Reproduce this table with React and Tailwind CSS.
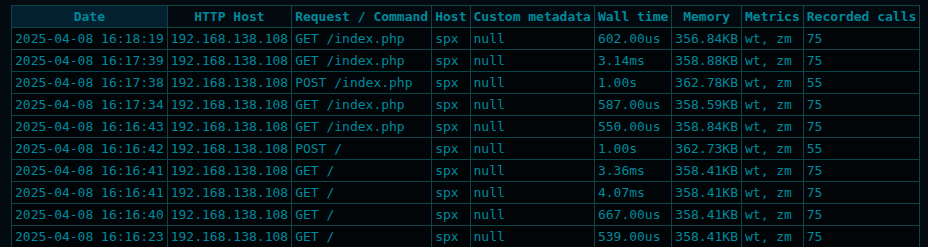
const columns = [
  'Date',
  'HTTP Host',
  'Request / Command',
  'Host',
  'Custom metadata',
  'Wall time',
  'Memory',
  'Metrics',
  'Recorded calls',
];

const rows = [
  ['2025-04-08 16:18:19', '192.168.138.108', 'GET /index.php', 'spx', 'null', '602.00us', '356.84KB', 'wt, zm', '75'],
  ['2025-04-08 16:17:39', '192.168.138.108', 'GET /index.php', 'spx', 'null', '3.14ms', '358.88KB', 'wt, zm', '75'],
  ['2025-04-08 16:17:38', '192.168.138.108', 'POST /index.php', 'spx', 'null', '1.00s', '362.78KB', 'wt, zm', '55'],
  ['2025-04-08 16:17:34', '192.168.138.108', 'GET /index.php', 'spx', 'null', '587.00us', '358.59KB', 'wt, zm', '75'],
  ['2025-04-08 16:16:43', '192.168.138.108', 'GET /index.php', 'spx', 'null', '550.00us', '358.84KB', 'wt, zm', '75'],
  ['2025-04-08 16:16:42', '192.168.138.108', 'POST /', 'spx', 'null', '1.00s', '362.73KB', 'wt, zm', '55'],
  ['2025-04-08 16:16:41', '192.168.138.108', 'GET /', 'spx', 'null', '3.36ms', '358.41KB', 'wt, zm', '75'],
  ['2025-04-08 16:16:41', '192.168.138.108', 'GET /', 'spx', 'null', '4.07ms', '358.41KB', 'wt, zm', '75'],
  ['2025-04-08 16:16:40', '192.168.138.108', 'GET /', 'spx', 'null', '667.00us', '358.41KB', 'wt, zm', '75'],
  ['2025-04-08 16:16:23', '192.168.138.108', 'GET /', 'spx', 'null', '539.00us', '358.41KB', 'wt, zm', '75'],
];

export default function App() {
  return (
    <div
      className="min-h-screen bg-[#030b10] pl-[11px] pt-[5px] text-[13px] leading-[15px] text-[#00899c]"
      style={{ fontFamily: '"DejaVu Sans Mono", monospace' }}
    >
      <table className="border-collapse">
        <thead>
          <tr>
            {columns.map((c, i) => (
              <th
                key={c}
                className={`border border-[#0b4548] p-[3px] text-center font-bold whitespace-nowrap ${
                  i === 0 ? 'bg-[#02202e]' : 'bg-[#030a0f]'
                }`}
              >
                {c}
              </th>
            ))}
          </tr>
        </thead>
        <tbody>
          {rows.map((r, ri) => (
            <tr key={ri} className="bg-[#020507]">
              {r.map((v, ci) => (
                <td key={ci} className="border border-[#0b4548] p-[3px] text-left whitespace-nowrap">
                  {v}
                </td>
              ))}
            </tr>
          ))}
        </tbody>
      </table>
    </div>
  );
}
